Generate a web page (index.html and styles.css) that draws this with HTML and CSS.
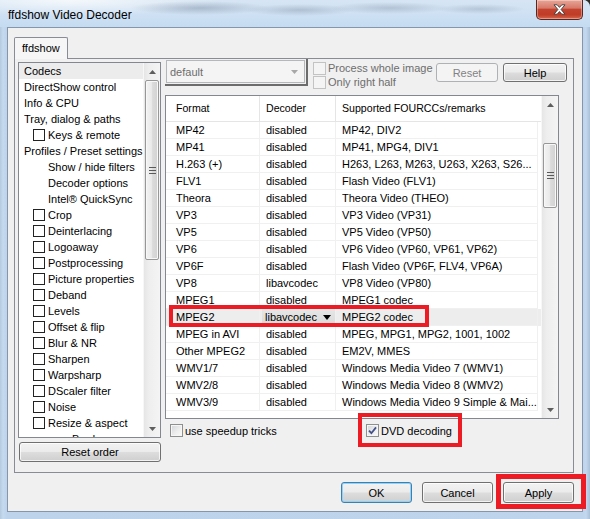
FILE: index.html
```html
<!DOCTYPE html>
<html>
<head>
<meta charset="utf-8">
<title>ffdshow Video Decoder</title>
<link rel="stylesheet" href="styles.css">
</head>
<body>
<div class="window">
  <div class="titlebar">
    <span class="title">ffdshow Video Decoder</span>
    <div class="close">
      <svg width="13" height="11" viewBox="0 0 13 11"><path d="M1 0.8 H4.2 L6.5 3.4 L8.8 0.8 H12 L8.1 5.5 L12 10.2 H8.8 L6.5 7.6 L4.2 10.2 H1 L4.9 5.5 Z" fill="#ffffff" stroke="#3b3b3b" stroke-width="0.9" stroke-linejoin="round"/></svg>
    </div>
  </div>
  <div class="client">
    <div class="tabstrip"><div class="tab">ffdshow</div></div>
    <div class="panel">
      <div class="leftcol">
        <div class="tree">
          <div class="tree-items">
            <div class="ti sel">Codecs</div>
            <div class="ti">DirectShow control</div>
            <div class="ti">Info &amp; CPU</div>
            <div class="ti">Tray, dialog &amp; paths</div>
            <div class="ti chk"><span class="tcb"></span>Keys &amp; remote</div>
            <div class="ti">Profiles / Preset settings</div>
            <div class="ti sub">Show / hide filters</div>
            <div class="ti sub">Decoder options</div>
            <div class="ti sub">Intel® QuickSync</div>
            <div class="ti chk"><span class="tcb"></span>Crop</div>
            <div class="ti chk"><span class="tcb"></span>Deinterlacing</div>
            <div class="ti chk"><span class="tcb"></span>Logoaway</div>
            <div class="ti chk"><span class="tcb"></span>Postprocessing</div>
            <div class="ti chk"><span class="tcb"></span>Picture properties</div>
            <div class="ti chk"><span class="tcb"></span>Deband</div>
            <div class="ti chk"><span class="tcb"></span>Levels</div>
            <div class="ti chk"><span class="tcb"></span>Offset &amp; flip</div>
            <div class="ti chk"><span class="tcb"></span>Blur &amp; NR</div>
            <div class="ti chk"><span class="tcb"></span>Sharpen</div>
            <div class="ti chk"><span class="tcb"></span>Warpsharp</div>
            <div class="ti chk"><span class="tcb"></span>DScaler filter</div>
            <div class="ti chk"><span class="tcb"></span>Noise</div>
            <div class="ti chk"><span class="tcb"></span>Resize &amp; aspect</div>
            <div class="ti sub2">Borders</div>
          </div>
          <div class="vsb tree-sb">
            <div class="sb-btn"><svg width="7" height="4" viewBox="0 0 7 4"><polygon points="0,4 3.5,0 7,4" fill="#5e5e5e"/></svg></div>
            <div class="thumb tree-thumb"><span class="grip"></span></div>
            <div class="sb-track"></div>
            <div class="sb-btn"><svg width="7" height="4" viewBox="0 0 7 4"><polygon points="0,0 7,0 3.5,4" fill="#5e5e5e"/></svg></div>
          </div>
        </div>
        <button class="btn btn-reset-order">Reset order</button>
      </div>
      <div class="rightcol">
        <div class="toolbar">
          <div class="combo-frame">
            <div class="combo"><span>default</span><svg class="combo-arrow" width="7" height="4" viewBox="0 0 7 4"><polygon points="0,0 7,0 3.5,4" fill="#a7a7a7"/></svg></div>
          </div>
          <div class="topchecks">
            <div class="check-row"><span class="cb cb-disabled"></span><span class="dis">Process whole image</span></div>
            <div class="check-row"><span class="cb cb-disabled"></span><span class="dis">Only right half</span></div>
          </div>
          <div class="tbtns">
            <button class="btn btn-disabled btn-reset">Reset</button>
            <button class="btn btn-help">Help</button>
          </div>
        </div>
        <div class="list">
          <div class="list-main">
            <div class="lh"><div class="c1">Format</div><div class="c2">Decoder</div><div class="c3">Supported FOURCCs/remarks</div></div>
            <div class="lr"><div class="c1">MP42</div><div class="c2">disabled</div><div class="c3">MP42, DIV2</div></div>
            <div class="lr"><div class="c1">MP41</div><div class="c2">disabled</div><div class="c3">MP41, MPG4, DIV1</div></div>
            <div class="lr"><div class="c1">H.263 (+)</div><div class="c2">disabled</div><div class="c3">H263, L263, M263, U263, X263, S26...</div></div>
            <div class="lr"><div class="c1">FLV1</div><div class="c2">disabled</div><div class="c3">Flash Video (FLV1)</div></div>
            <div class="lr"><div class="c1">Theora</div><div class="c2">disabled</div><div class="c3">Theora Video (THEO)</div></div>
            <div class="lr"><div class="c1">VP3</div><div class="c2">disabled</div><div class="c3">VP3 Video (VP31)</div></div>
            <div class="lr"><div class="c1">VP5</div><div class="c2">disabled</div><div class="c3">VP5 Video (VP50)</div></div>
            <div class="lr"><div class="c1">VP6</div><div class="c2">disabled</div><div class="c3">VP6 Video (VP60, VP61, VP62)</div></div>
            <div class="lr"><div class="c1">VP6F</div><div class="c2">disabled</div><div class="c3">Flash Video (VP6F, FLV4, VP6A)</div></div>
            <div class="lr"><div class="c1">VP8</div><div class="c2">libavcodec</div><div class="c3">VP8 Video (VP80)</div></div>
            <div class="lr"><div class="c1">MPEG1</div><div class="c2">disabled</div><div class="c3">MPEG1 codec</div></div>
            <div class="lr sel"><div class="c1">MPEG2</div><div class="c2 c2-combo"><div class="cellcombo"><span>libavcodec</span><svg class="cellcombo-arrow" width="8" height="5" viewBox="0 0 8 5"><polygon points="0,0 8,0 4,5" fill="#000"/></svg></div></div><div class="c3">MPEG2 codec</div></div>
            <div class="lr"><div class="c1">MPEG in AVI</div><div class="c2">disabled</div><div class="c3">MPEG, MPG1, MPG2, 1001, 1002</div></div>
            <div class="lr"><div class="c1">Other MPEG2</div><div class="c2">disabled</div><div class="c3">EM2V, MMES</div></div>
            <div class="lr"><div class="c1">WMV1/7</div><div class="c2">disabled</div><div class="c3">Windows Media Video 7 (WMV1)</div></div>
            <div class="lr"><div class="c1">WMV2/8</div><div class="c2">disabled</div><div class="c3">Windows Media Video 8 (WMV2)</div></div>
            <div class="lr"><div class="c1">WMV3/9</div><div class="c2">disabled</div><div class="c3">Windows Media Video 9 Simple &amp; Mai...</div></div>
          </div>
          <div class="vsb list-sb">
            <div class="sb-btn"><svg width="7" height="4" viewBox="0 0 7 4"><polygon points="0,4 3.5,0 7,4" fill="#5e5e5e"/></svg></div>
            <div class="sb-gap"></div>
            <div class="thumb list-thumb"><span class="grip"></span></div>
            <div class="sb-track"></div>
            <div class="sb-btn"><svg width="7" height="4" viewBox="0 0 7 4"><polygon points="0,0 7,0 3.5,4" fill="#5e5e5e"/></svg></div>
          </div>
        </div>
        <div class="options">
          <div class="opt opt-speedup"><span class="cb"></span><span>use speedup tricks</span></div>
          <div class="opt"><span class="cb cb-checked"><svg width="11" height="11" viewBox="0 0 11 11"><path d="M2 5.6 L4.4 8.2 L9 2.4" fill="none" stroke="#41518a" stroke-width="1.8"/></svg></span><span>DVD decoding</span></div>
        </div>
      </div>
    </div>
    <div class="footer">
      <button class="btn btn-default">OK</button>
      <button class="btn">Cancel</button>
      <button class="btn">Apply</button>
    </div>
  </div>
  <div class="mark mark-mpeg2"></div>
  <div class="mark mark-dvd"></div>
  <div class="mark mark-apply"></div>
</div>
</body>
</html>
```
FILE: styles.css
```css
* { box-sizing: border-box; }

html, body {
  margin: 0;
  padding: 0;
}

body {
  width: 590px;
  height: 519px;
  overflow: hidden;
  background: #2e2e26;
  font-family: "Liberation Sans", Arial, sans-serif;
  font-size: 11px;
  color: #000;
}

.window {
  position: relative;
  width: 590px;
  height: 519px;
  border-top-right-radius: 7px;
  overflow: hidden;
  background: linear-gradient(to right, #b4c9df 0, #c6daee 3px, #bcd3eb 7px, #bdd4ec 583px, #c3d8ee 586px, #a9c0d8 590px);
}

/* ---------- title bar ---------- */
.titlebar {
  height: 27px;
  display: flex;
  align-items: flex-start;
  background:
    radial-gradient(ellipse 70px 7px at 200px 8px, rgba(80, 95, 120, 0.30), rgba(80, 95, 120, 0) 100%),
    radial-gradient(ellipse 55px 6px at 300px 10px, rgba(80, 95, 120, 0.26), rgba(80, 95, 120, 0) 100%),
    radial-gradient(ellipse 60px 6px at 390px 8px, rgba(80, 95, 120, 0.24), rgba(80, 95, 120, 0) 100%),
    radial-gradient(ellipse 45px 5px at 480px 9px, rgba(80, 95, 120, 0.22), rgba(80, 95, 120, 0) 100%),
    radial-gradient(ellipse 150px 16px at 70px 0px, rgba(255, 255, 255, 0.75), rgba(255, 255, 255, 0) 100%),
    linear-gradient(to bottom, #d7e5f3 0, #cde0f3 60%, #c4dbf1 100%);
}

.title {
  margin: 8px 0 0 8px;
  font-size: 12px;
  line-height: 14px;
  color: #000;
}

.close {
  margin-left: auto;
  margin-right: 7px;
  width: 47px;
  height: 20px;
  border: 1px solid #5a2620;
  border-top: none;
  border-radius: 0 0 5px 5px;
  background: linear-gradient(to bottom, #e8a597 0%, #d67a69 42%, #c4432e 50%, #bf3c27 78%, #d9684d 100%);
  box-shadow: inset 0 0 0 1px rgba(255, 255, 255, 0.35);
  display: flex;
  align-items: center;
  justify-content: center;
}

/* ---------- client area ---------- */
.client {
  margin-left: 7px;
  width: 576px;
  height: 485px;
  border: 1px solid #8596ab;
  background: #f0f0f0;
}

.tabstrip {
  height: 30px;
  padding: 9px 0 0 6px;
  display: flex;
  align-items: flex-start;
}

.tab {
  position: relative;
  z-index: 1;
  width: 54px;
  height: 22px;
  border: 1px solid #898c95;
  border-bottom: none;
  border-radius: 2px 2px 0 0;
  background: #f6f6f6;
  padding-left: 7px;
  line-height: 20px;
}

.panel {
  margin-left: 6px;
  width: 560px;
  height: 415px;
  border: 1px solid #898c95;
  background: #f0f0f0;
  display: flex;
  align-items: flex-start;
}

/* ---------- left column / tree ---------- */
.leftcol {
  margin: 3px 0 0 3px;
  width: 143px;
}

.tree {
  height: 376px;
  border: 1px solid #828790;
  background: #fff;
  display: flex;
}

.tree-items {
  flex: 1;
  overflow: hidden;
}

.ti {
  height: 16px;
  line-height: 16px;
  white-space: nowrap;
  display: flex;
  align-items: center;
  padding-left: 5px;
}

.ti.sel { background: #ececec; }
.ti.chk { padding-left: 14px; }
.ti.sub { padding-left: 29px; }
.ti.sub2 { padding-left: 53px; }

.tcb {
  width: 12px;
  height: 12px;
  border: 1px solid #222;
  background: #fff;
  margin-right: 3px;
  flex: none;
}

/* ---------- scrollbars ---------- */
.vsb {
  width: 17px;
  flex: none;
  display: flex;
  flex-direction: column;
  background: linear-gradient(to right, #e6e6e6 0, #eeeeee 30%, #f4f4f4 100%);
  border-left: 1px solid #f7f7f7;
}

.sb-btn {
  height: 17px;
  flex: none;
  display: flex;
  align-items: center;
  justify-content: center;
}

.sb-track { flex: 1; }

.sb-gap { height: 30px; flex: none; }

.thumb {
  flex: none;
  margin: 0 1px 0 1px;
  border: 1px solid #979797;
  border-radius: 2px;
  background: linear-gradient(to right, #f3f3f3 0, #eaeaea 45%, #dbdbdb 55%, #d2d2d2 100%);
  box-shadow: inset 0 0 0 1px #f8f8f8;
  display: flex;
  align-items: center;
  justify-content: center;
}

.tree-thumb { height: 180px; }
.list-thumb { height: 65px; }

.grip {
  width: 7px;
  height: 7px;
  background: repeating-linear-gradient(to bottom, #5a5a5a 0, #5a5a5a 1px, transparent 1px, transparent 3px);
}

/* ---------- buttons ---------- */
.btn {
  font: inherit;
  color: #000;
  padding: 0;
  margin: 0;
  border: 1px solid #707070;
  border-radius: 3px;
  background: linear-gradient(to bottom, #f2f2f2 0%, #ebebeb 49%, #dddddd 51%, #cfcfcf 100%);
  box-shadow: inset 0 0 0 1px rgba(255, 255, 255, 0.75);
  display: flex;
  align-items: center;
  justify-content: center;
}

.btn-reset-order {
  margin: 4px 0 0 1px;
  width: 142px;
  height: 20px;
}

.btn-disabled {
  border-color: #adb2b5;
  background: #f4f4f4;
  box-shadow: none;
  color: #838383;
}

.btn-reset { width: 62px; height: 19px; }
.btn-help { width: 64px; height: 19px; }

.btn-default {
  border-color: #3c7fb1;
  box-shadow: inset 0 0 0 1px #8fd3f8;
}

/* ---------- right column ---------- */
.rightcol {
  margin-left: 4px;
  width: 407px;
}

.toolbar {
  height: 36px;
  display: flex;
  align-items: flex-start;
}

.combo-frame {
  padding: 1px;
  border-right: 2px solid #6c6c6c;
  border-bottom: 2px solid #6c6c6c;
}

.combo {
  width: 139px;
  height: 23px;
  border: 1px solid #b4b8bb;
  background: #f4f4f4;
  display: flex;
  align-items: center;
  padding-left: 3px;
  color: #6d6d6d;
}

.combo-arrow { margin-left: auto; margin-right: 6px; }

.topchecks { margin: 2px 0 0 4px; }

.check-row {
  height: 14px;
  display: flex;
  align-items: center;
  white-space: nowrap;
}

.check-row .cb { margin-left: 1px; margin-right: 2px; }

.dis { color: #6d6d6d; }

.tbtns {
  margin: 4px 5px 0 auto;
  display: flex;
  gap: 5px;
}

/* checkboxes */
.cb {
  width: 13px;
  height: 13px;
  flex: none;
  border: 1px solid #8e8f8f;
  background: linear-gradient(135deg, #d2d4d7 0%, #ededed 55%, #fbfbfb 100%);
  box-shadow: inset 0 0 0 1px #f6f6f6;
  display: flex;
  align-items: center;
  justify-content: center;
}

.cb-disabled {
  border-color: #c3c3c3;
  background: #f4f4f4;
  box-shadow: none;
}

/* ---------- list view ---------- */
.list {
  width: 394px;
  height: 324px;
  border: 1px solid #828790;
  background: #fff;
  display: flex;
}

.list-main {
  flex: 1;
  overflow: hidden;
}

.lh, .lr {
  display: flex;
  white-space: nowrap;
}

.lh {
  height: 26px;
  line-height: 25px;
  border-bottom: 1px solid #e5e5e5;
  font-size: 10.6px;
}

.lh > div { border-right: 1px solid #e5e5e5; }
.lh > .c3 { border-right: none; }

.lr {
  height: 17px;
  line-height: 16px;
}

.lr > div {
  border-right: 1px solid #f0f0f0;
  border-bottom: 1px solid #f0f0f0;
}

.lr.sel { background: #ededed; }

.c1 { width: 94px; padding-left: 10px; overflow: hidden; }
.c2 { width: 76px; padding-left: 6px; overflow: hidden; }
.c3 { width: 202px; padding-left: 6px; overflow: hidden; }

.c2-combo { padding-left: 0; }

.cellcombo {
  margin-left: 2px;
  width: 73px;
  height: 16px;
  background: linear-gradient(to bottom, #e6e6e6, #dadada);
  display: flex;
  align-items: center;
  padding-left: 3px;
}

.cellcombo-arrow { margin-left: auto; margin-right: 4px; }

/* ---------- options row ---------- */
.options {
  margin-top: 5px;
  padding-left: 5px;
  display: flex;
  align-items: center;
  height: 13px;
}

.opt {
  display: flex;
  align-items: center;
  gap: 2px;
  white-space: nowrap;
}

.opt-speedup { width: 196px; }

/* ---------- footer ---------- */
.footer {
  margin: 9px 8px 0 0;
  display: flex;
  justify-content: flex-end;
  gap: 10px;
}

.footer .btn { width: 71px; height: 21px; }

/* ---------- red annotation marks ---------- */
.mark {
  position: absolute;
  border: 4px solid #ed1c24;
}

.mark-mpeg2 { left: 169px; top: 305px; width: 260px; height: 22px; }
.mark-dvd { left: 358px; top: 413px; width: 104px; height: 34px; }
.mark-apply { left: 496px; top: 474px; width: 90px; height: 35px; border-width: 5px; }
```
